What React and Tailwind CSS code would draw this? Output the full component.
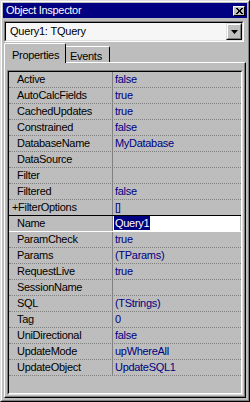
const PROPS = [
    ["Active", "false"],
    ["AutoCalcFields", "true"],
    ["CachedUpdates", "true"],
    ["Constrained", "false"],
    ["DatabaseName", "MyDatabase"],
    ["DataSource", ""],
    ["Filter", ""],
    ["Filtered", "false"],
    ["+FilterOptions", "[]"],
    ["Name", "Query1"],
    ["ParamCheck", "true"],
    ["Params", "(TParams)"],
    ["RequestLive", "true"],
    ["SessionName", ""],
    ["SQL", "(TStrings)"],
    ["Tag", "0"],
    ["UniDirectional", "false"],
    ["UpdateMode", "upWhereAll"],
    ["UpdateObject", "UpdateSQL1"]
];

const SELECTED = "Name";

function Row({name, value, selected, beforeSelected}) {
    const expandable = name.startsWith("+");
    let bottom = "border-b border-dotted border-b-[#808080]";
    if (beforeSelected) bottom = "border-b border-solid border-b-black";
    if (selected) bottom = "border-b border-solid border-b-white";

    return (
        <div className={`flex h-[16px] ${bottom}`}>
            <div className={`w-[104px] shrink-0 border-r border-r-[#808080] leading-[15px] text-black ${expandable ? 'pl-[3px]' : 'pl-[8px]'}`}>
                {name}
            </div>
            {selected ? (
                <div className="flex-1 bg-white mr-[1px] pl-[1px] leading-[15px]">
                    <span className="inline-block bg-[#000080] text-white px-[1px] leading-[14px]">{value}</span>
                </div>
            ) : (
                <div className="flex-1 pl-[2px] leading-[15px] text-[#000080]">{value}</div>
            )}
        </div>
    );
}

export default function App() {
    const selIdx = PROPS.findIndex(p => p[0] === SELECTED);

    return (
        <div className="w-[250px] h-[402px] bg-[#bdbdbd] border border-t-[#dfdfdf] border-l-[#dfdfdf] border-r-black border-b-black font-['Liberation_Sans',Arial,sans-serif] text-[11px] tracking-[-0.3px] select-none">
            <div className="h-full flex flex-col border border-t-white border-l-white border-r-[#808080] border-b-[#808080] p-[1px]">
                {/* caption */}
                <div className="h-[15px] shrink-0 bg-[#000080] flex items-center justify-between pl-[3px] pr-[2px]">
                    <span className="text-white leading-[15px]">Object Inspector</span>
                    <button className="w-[12px] h-[10px] bg-[#c0c0c0] border border-t-white border-l-white border-r-black border-b-black flex items-center justify-center">
                        <svg width="7" height="6" viewBox="0 0 7 6">
                            <path d="M0 0h2v1h1v1h1V1h1V0h2v1H6v1H5v2h1v1h1v1H5V5H4V4H3v1H2v1H0V5h1V4h1V2H1V1H0z" fill="black" />
                        </svg>
                    </button>
                </div>

                {/* object combo */}
                <div className="mt-[3px] ml-[1px] mr-[3px] h-[21px] shrink-0 border border-t-[#808080] border-l-[#808080] border-r-white border-b-white">
                    <div className="h-full flex border border-t-black border-l-black border-r-[#dfdfdf] border-b-[#dfdfdf] bg-[#f6f6f6]">
                        <span className="flex-1 pl-[4px] leading-[17px] text-black tracking-[-0.2px]">Query1: TQuery</span>
                        <div className="w-[16px] h-full bg-[#c0c0c0] border border-t-[#dfdfdf] border-l-[#dfdfdf] border-r-black border-b-black">
                            <div className="h-full flex items-center justify-center border border-t-white border-l-white border-r-[#808080] border-b-[#808080]">
                                <svg width="7" height="4" viewBox="0 0 7 4">
                                    <path d="M0 0h7L3.5 4z" fill="black" />
                                </svg>
                            </div>
                        </div>
                    </div>
                </div>

                {/* tabs */}
                <div className="mt-[1px] ml-[1px] h-[19px] shrink-0 flex items-end">
                    <div className="relative z-10 w-[62px] h-[20px] -mb-[1px] bg-[#bdbdbd] border-l border-t border-r border-l-white border-t-white border-r-black rounded-t-[2px] pl-[7px] pt-[5px] leading-[13px] text-black">
                        Properties
                    </div>
                    <div className="w-[44px] h-[16px] bg-[#bdbdbd] border-t border-r border-t-white border-r-black rounded-tr-[2px] pl-[4px] pt-[3px] leading-[13px] text-black">
                        Events
                    </div>
                </div>

                {/* page */}
                <div className="flex-1 ml-[1px] mr-[1px] mb-[1px] border border-t-white border-l-white border-r-black border-b-black">
                    <div className="h-full flex flex-col border-r border-b border-r-[#808080] border-b-[#808080] pt-[7px] pl-[2px] pr-[1px] pb-[1px]">
                        <div className="flex-1 border border-t-[#808080] border-l-[#808080] border-r-[#dfdfdf] border-b-[#dfdfdf]">
                            <div className="h-full border border-t-black border-l-black border-r-white border-b-white">
                                {PROPS.map(([n, v], i) => (
                                    <Row
                                        key={n}
                                        name={n}
                                        value={v}
                                        selected={i === selIdx}
                                        beforeSelected={i === selIdx - 1}
                                    />
                                ))}
                            </div>
                        </div>
                    </div>
                </div>
            </div>
        </div>
    );
}
